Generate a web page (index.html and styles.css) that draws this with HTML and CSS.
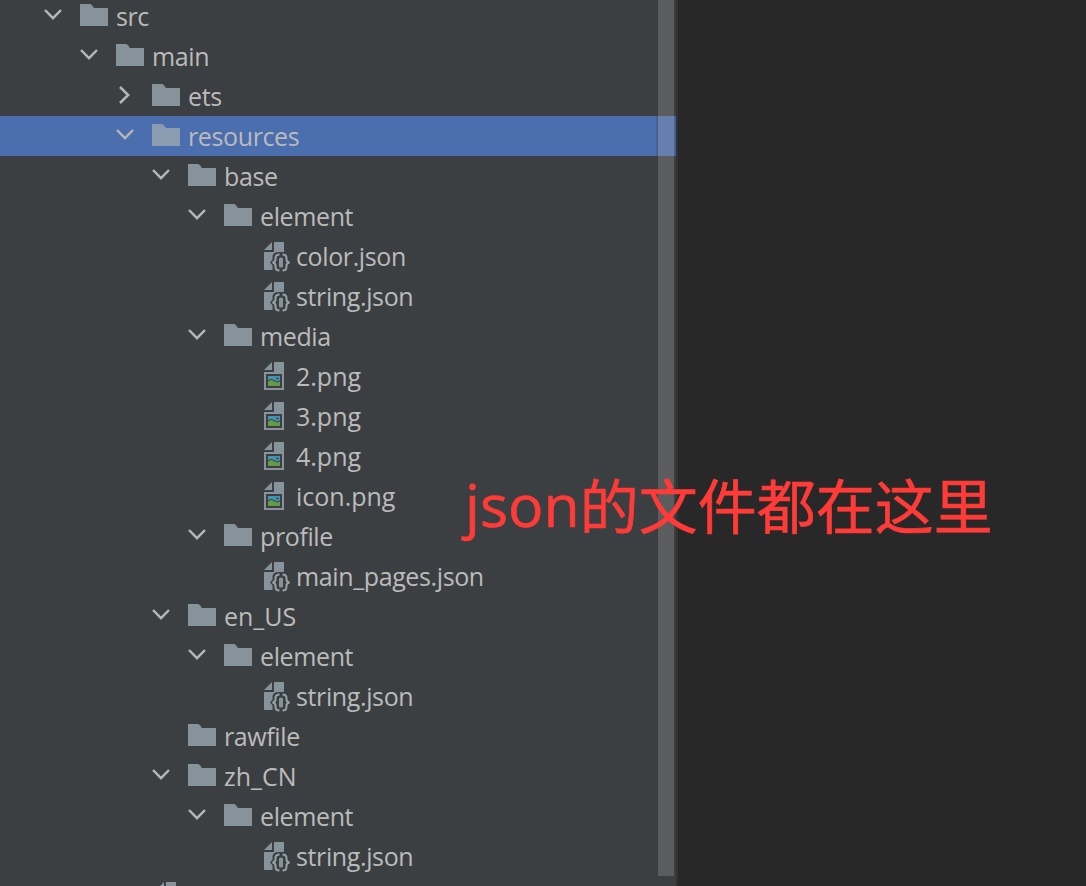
FILE: index.html
```html
<!DOCTYPE html>
<html lang="zh-CN">
<head>
  <meta charset="UTF-8">
  <title>Project</title>
  <link rel="stylesheet" href="styles.css">
</head>
<body>
  <svg class="sprite">
    <symbol id="down" viewBox="0 0 32 32"><path d="M7 10l8 8.200 8-8.200" fill="none" stroke="#b4b6b7" stroke-width="2.500"/></symbol>
    <symbol id="right" viewBox="0 0 32 32"><path d="M10 7l8.200 8-8.200 8" fill="none" stroke="#b4b6b7" stroke-width="2.500"/></symbol>
    <symbol id="folder" viewBox="0 0 32 32"><path d="M2 4h9.500q1.500 0 2.500 1.200L16 8h14v18H2z"/></symbol>
    <symbol id="json" viewBox="0 0 32 32">
      <path d="M6 10l8-8v8zM16 2h10v10h-5q-6.500 0-6.500 5v2.500l-2.500 3 2.500 3v4.500H6V12h10z"/>
      <path d="M21.500 14.500q-4 0-4 3.500v1.500q0 2.500-3 3 3 .5 3 3V27q0 3.500 4 3.500M24.500 14.500q4 0 4 3.500v1.500q0 2.500 3 3-3 .5-3 3V27q0 3.500-4 3.500" fill="none" stroke="#94a1a9" stroke-width="2"/>
      <rect x="21" y="17.500" width="4" height="10" rx="1.500"/>
    </symbol>
    <symbol id="image" viewBox="0 0 32 32">
      <path d="M6 10l8-8v8zM16 2h10v28H6V12h10z"/>
      <path d="M8 14h16v14H8z" fill="#3c3f41"/>
      <path d="M10 16h12v10H10z" fill="#3f94b8"/>
      <path d="M10 21q3-3 6-.5t6 .5v5H10z" fill="#629c47"/>
      <path d="M10 21q3-3 6-.5t6 .5" fill="none" stroke="#3c3f41" stroke-width="1"/>
      <circle cx="19.500" cy="18.500" r="1" fill="#3c3f41"/>
    </symbol>
  </svg>

  <div class="window">
    <ul class="tree" id="tree"></ul>
    <div class="scrollbar"></div>
    <div class="editor"></div>
  </div>
  <div class="note"><span class="latin">json</span>的文件都在这里</div>

  <script src="tree.js"></script>
</body>
</html>
```
FILE: styles.css
```css
body {
  margin: 0;
  height: 886px;
  overflow: hidden;
  background: #282828;
  font-family: "Open Sans", "Noto Sans", sans-serif;
}

.sprite {
  display: none;
}

.window {
  display: flex;
  position: relative;
  height: 886px;
}

.tree {
  box-sizing: border-box;
  width: 676px;
  height: 886px;
  margin: 0;
  padding: 0;
  overflow: hidden;
  list-style: none;
  background: #3c3f41;
}

.row {
  display: flex;
  align-items: center;
  height: 40px;
  color: #bbbbbb;
  font-size: 25px;
  line-height: 40px;
  white-space: nowrap;
}

.row:first-child {
  margin-top: -4px;
}

.row.selected {
  background: #4b6eaf;
}

.indent {
  flex: none;
  width: 36px;
}

.arrow {
  flex: none;
  width: 32px;
  height: 32px;
  margin-left: 2px;
  margin-right: 8px;
}

.icon {
  flex: none;
  width: 32px;
  height: 32px;
  margin-right: 6px;
  fill: #87939a;
}

.selected .icon {
  fill: #8b9cb1;
}

.label {
  letter-spacing: -0.38px;
}

.label.wide {
  letter-spacing: 0;
}

.scrollbar {
  position: absolute;
  left: 656px;
  top: 0;
  box-sizing: border-box;
  width: 20px;
  height: 876px;
  border: solid rgba(56, 56, 56, 0.25);
  border-width: 0 2px;
  background: rgba(180, 177, 172, 0.26);
  background-clip: padding-box;
}

.editor {
  flex: 1;
  border-left: 2px solid #323232;
  background: #282828;
}

.note {
  position: absolute;
  left: 465px;
  top: 464px;
  color: #ff3b38;
  font-family: "Open Sans", "Noto Sans CJK SC", sans-serif;
  font-size: 59px;
  line-height: 84px;
  white-space: nowrap;
  -webkit-text-stroke: 0.6px #ff3b38;
}

.note .latin {
  position: relative;
  top: -2px;
}
```
FILE: tree.js
```js
// [depth, arrow, icon, name]
const rows = [
  [0, "down", "folder", "src"],
  [1, "down", "folder", "main"],
  [2, "right", "folder", "ets"],
  [2, "down", "folder", "resources"],
  [3, "down", "folder", "base"],
  [4, "down", "folder", "element"],
  [5, "", "json", "color.json"],
  [5, "", "json", "string.json"],
  [4, "down", "folder", "media"],
  [5, "", "image", "2.png"],
  [5, "", "image", "3.png"],
  [5, "", "image", "4.png"],
  [5, "", "image", "icon.png"],
  [4, "down", "folder", "profile"],
  [5, "", "json", "main_pages.json"],
  [3, "down", "folder", "en_US"],
  [4, "down", "folder", "element"],
  [5, "", "json", "string.json"],
  [3, "", "folder", "rawfile"],
  [3, "down", "folder", "zh_CN"],
  [4, "down", "folder", "element"],
  [5, "", "json", "string.json"],
  [2, "", "json", ""]
];

document.getElementById("tree").innerHTML = rows.map(([depth, arrow, icon, name]) => `
  <li class="row ${name === "resources" ? "selected" : ""}">
    ${'<span class="indent"></span>'.repeat(depth + 1)}
    <svg class="arrow">${arrow ? `<use href="#${arrow}"/>` : ""}</svg>
    <svg class="icon"><use href="#${icon}"/></svg>
    <span class="label ${/png|[A-Z]/.test(name) ? "wide" : ""}">${name}</span>
  </li>`).join("");
```
